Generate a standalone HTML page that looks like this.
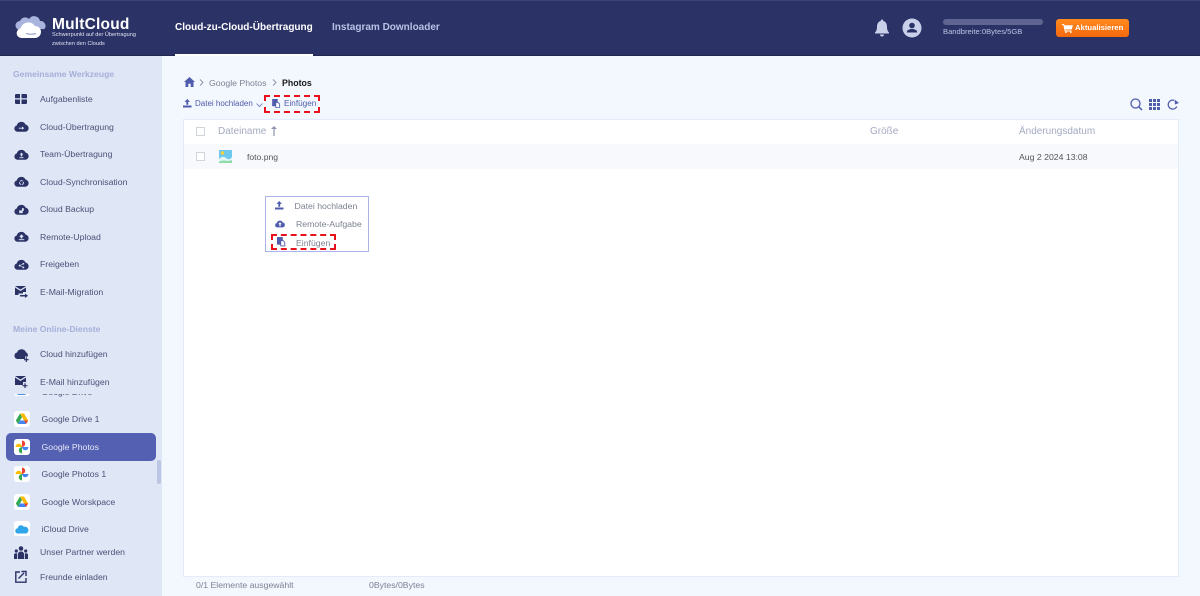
<!DOCTYPE html>
<html lang="de"><head><meta charset="utf-8"><title>MultCloud</title>
<style>
*{box-sizing:border-box}
html,body{margin:0;padding:0;background:#f3f7fe}
#w{width:1200px;height:596px;overflow:hidden;position:relative;background:#f3f7fe;font-family:"Liberation Sans",sans-serif;filter:blur(.3px)}
body{width:1200px;height:596px;overflow:hidden}
.t{position:absolute;white-space:nowrap;line-height:12px;font-size:8.7px;color:#4a5176}
.a{position:absolute}
svg{position:absolute;overflow:visible}
.ic{fill:#2b3266}
.tile{position:absolute;left:13.500px;width:16px;height:16px;background:#fff;border-radius:3px}
</style></head><body><div id="w">
<svg width="0" height="0" style="position:absolute"><defs>
<path id="cl" d="M3.600 11.700a3.500 3.500 0 0 1-.7-6.900A5.100 5.100 0 0 1 12.500 4a3.900 3.900 0 0 1 0 7.700z"/>
<g id="gp"><path d="M8 8V1.500a3.250 3.250 0 0 1 0 6.500z" fill="#ea4335"/><path d="M8 8h6.500a3.250 3.250 0 0 1-6.500 0z" fill="#4285f4"/><path d="M8 8v6.500a3.250 3.250 0 0 1 0-6.500z" fill="#34a853"/><path d="M8 8H1.500a3.250 3.250 0 0 1 6.500 0z" fill="#fbbc04"/></g>
<g id="gd"><path d="M6 2.500l2 3.500-4 7-2.200-3.500z" fill="#34a853"/><path d="M6 2.500h4l4.200 7h-4.200z" fill="#fbbc04"/><path d="M6 9.500h8.200L12 13H4z" fill="#4285f4"/><path d="M14.200 9.500L12 13l-1.800-3.500z" fill="#ea4335"/></g>
<path id="up" d="M5 0L1.800 3.400h2.100v3.300h2.200V3.400h2.100zM0 7.700h10V10H0z"/>
<g id="pa"><path d="M0 0h6.500v8.500H0z" fill="#4f5bab"/><path d="M4.200 4h2.600l2 2v4H4.200z" fill="#fff" stroke="#4f5bab" stroke-width="1"/></g>
</defs></svg>

<!-- Header -->
<div class="a" style="left:0;top:0;width:1200px;height:56px;background:#2b3266;border-top:1px solid #3b4274;border-bottom:1px solid #20264f"></div>
<svg style="left:15px;top:16px" width="32" height="24" viewBox="0 0 32 24">
<path d="M5 14a4.500 4.500 0 0 1 0-9 5.500 5.500 0 0 1 9-2 6 6 0 0 1 11 2 5 5 0 0 1 4.500 8z" fill="#a9b4de"/>
<path d="M6.500 22a4.800 4.800 0 0 1-1-9.500A8 8 0 0 1 20 10a6 6 0 0 1 6 6 6 6 0 0 1-5 6z" fill="#fff"/>
<path d="M11 17.500q5 1.500 10 0" stroke="#8f98c2" stroke-width="1" fill="none"/></svg>
<div class="t" style="left:52px;top:15px;font-size:15.500px;line-height:19px;font-weight:bold;color:#fff;letter-spacing:.2px">MultCloud</div>
<div class="t" style="left:52px;top:31px;font-size:5.600px;line-height:8px;color:#dfe3f5">Schwerpunkt auf der Übertragung</div>
<div class="t" style="left:52px;top:40px;font-size:5.600px;line-height:8px;color:#dfe3f5">zwischen den Clouds</div>
<div class="t" style="left:175px;top:21px;font-size:10px;line-height:14px;font-weight:bold;color:#fff">Cloud-zu-Cloud-Übertragung</div>
<div class="a" style="left:175px;top:54px;width:138px;height:2px;background:#fff"></div>
<div class="t" style="left:332px;top:21px;font-size:10px;line-height:14px;font-weight:bold;color:#b9c2e6">Instagram Downloader</div>

<svg style="left:874px;top:19px" width="16" height="18" viewBox="0 0 16 18"><path d="M8 0.500a1.300 1.300 0 0 1 1.300 1.500C12 2.700 13 5 13 8c0 3 1 4.500 2 5.500v1H1v-1C2 12.500 3 11 3 8c0-3 1-5.300 3.700-6A1.300 1.300 0 0 1 8 .5zM6 15.500h4a2 2 0 0 1-4 0z" fill="#c9d0ea"/></svg>
<svg style="left:902px;top:18px" width="20" height="20" viewBox="0 0 20 20"><circle cx="10" cy="10" r="9.500" fill="#c9d0ea"/><circle cx="10" cy="7.500" r="2.800" fill="#2b3266"/><path d="M4.800 14.500c0-2.500 2.500-3.500 5.200-3.500s5.200 1 5.200 3.500z" fill="#2b3266"/></svg>
<div class="a" style="left:943px;top:19px;width:100px;height:6px;border-radius:3px;background:#5f6590"></div>
<div class="t" style="left:943px;top:26px;font-size:7.600px;line-height:12px;color:#bcc4e6">Bandbreite:0Bytes/5GB</div>
<div class="a" style="left:1056px;top:19px;width:73px;height:18px;border-radius:3px;background:linear-gradient(#ff8a1e,#f5680c)"></div>
<svg style="left:1062px;top:24px" width="11" height="9" viewBox="0 0 11 9"><path d="M0 0h2l.5 1.200H11L9.700 5.500H3.400l.2 1h6v1H2.800L1.300 1H0z" fill="#fff"/><circle cx="4" cy="8.300" r=".8" fill="#fff"/><circle cx="8.800" cy="8.300" r=".8" fill="#fff"/></svg>
<div class="t" style="left:1075px;top:22px;font-size:7.700px;font-weight:bold;color:#fff">Aktualisieren</div>

<!-- Sidebar -->
<div class="a" style="left:0;top:56px;width:162px;height:540px;background:#dfe6f6"></div>
<div class="t" style="left:13px;top:68px;font-size:8.600px;font-weight:bold;color:#a6afd9">Gemeinsame Werkzeuge</div>

<svg style="left:15px;top:94px" width="12" height="10" viewBox="0 0 12 10"><path class="ic" d="M.8 0h4.200v4.300H0V.8zM6.500 0h4.700l.8.8v3.500H6.500zM0 5.500h5V10H.8L0 9.200zM6.500 5.500H12v3.700l-.8.8H6.500z"/></svg>
<div class="t" style="left:40px;top:93px">Aufgabenliste</div>

<svg style="left:13.500px;top:121px" width="15" height="11" viewBox="0 0 16 12"><use href="#cl" class="ic"/><path d="M5 7.300h3.500V6l2.500 1.800L8.500 9.600V8.300H5z" fill="#dfe6f6"/></svg>
<div class="t" style="left:40px;top:120.500px">Cloud-Übertragung</div>

<svg style="left:13.500px;top:148.500px" width="15" height="11" viewBox="0 0 16 12"><use href="#cl" class="ic"/><path d="M8 4L10 6H8.800v2H7.200V6H6zM5.800 9h4.400v.9H5.800z" fill="#dfe6f6"/></svg>
<div class="t" style="left:40px;top:148px">Team-Übertragung</div>

<svg style="left:13.500px;top:176px" width="15" height="11" viewBox="0 0 16 12"><use href="#cl" class="ic"/><circle cx="8" cy="7.200" r="2.100" fill="none" stroke="#dfe6f6" stroke-width="1" stroke-dasharray="3 1"/></svg>
<div class="t" style="left:40px;top:175.500px">Cloud-Synchronisation</div>

<svg style="left:13.500px;top:203.500px" width="15" height="11" viewBox="0 0 16 12"><use href="#cl" class="ic"/><path d="M8.500 4.500h2v3h-2zM5.500 7h3.800v3H5.500z" fill="#dfe6f6"/></svg>
<div class="t" style="left:40px;top:203px">Cloud Backup</div>

<svg style="left:13.500px;top:231px" width="15" height="11" viewBox="0 0 16 12"><use href="#cl" class="ic"/><path d="M8 3.500L10.500 6.300H9V8H7V6.300H5.500zM5 9h6v1H5z" fill="#dfe6f6"/></svg>
<div class="t" style="left:40px;top:230.500px">Remote-Upload</div>

<svg style="left:13.500px;top:258.500px" width="15" height="11" viewBox="0 0 16 12"><use href="#cl" class="ic"/><g fill="#dfe6f6"><circle cx="6" cy="7.200" r="1"/><circle cx="10" cy="5.200" r="1"/><circle cx="10" cy="9.200" r="1"/></g><path d="M6 7.200l4-2M6 7.200l4 2" stroke="#dfe6f6" stroke-width=".6"/></svg>
<div class="t" style="left:40px;top:258px">Freigeben</div>

<svg style="left:15px;top:286px" width="13" height="12" viewBox="0 0 13 12"><path class="ic" d="M0 0h11L5.500 3.500zM0 1.500l5.500 3.500L11 1.500V6H8v1.500H3.500V9H0z"/><path class="ic" d="M5 9h5V7.500l3 2.300-3 2.200v-1.500H5z"/></svg>
<div class="t" style="left:40px;top:285.500px">E-Mail-Migration</div>

<div class="t" style="left:13px;top:323px;font-size:8.600px;font-weight:bold;color:#a6afd9">Meine Online-Dienste</div>

<svg style="left:13.500px;top:349px" width="15" height="13" viewBox="0 0 15 13"><path class="ic" d="M3.500 10a3.300 3.300 0 0 1-.5-6.500A4.800 4.800 0 0 1 12 3.300 3.400 3.400 0 0 1 13.800 7.500H11V10z"/><path class="ic" d="M11.700 8.300h1.200v1.800h1.800v1.200h-1.800V13h-1.200v-1.700H10v-1.200h1.700z"/></svg>
<div class="t" style="left:40px;top:348px">Cloud hinzufügen</div>

<svg style="left:15px;top:376px" width="13" height="12" viewBox="0 0 13 12"><path class="ic" d="M0 0h11L5.500 3.500zM0 1.500l5.500 3.500L11 1.500V6H8v3H0z"/><path class="ic" d="M9.400 7.300h1.200v1.800h1.800v1.200h-1.800V12H9.400v-1.700H7.600V9.100h1.800z"/></svg>
<div class="t" style="left:40px;top:375.500px">E-Mail hinzufügen</div>

<!-- scrolling list -->
<div class="a" style="left:0;top:394px;width:162px;height:142px;overflow:hidden">
  <div class="a" style="left:13.500px;top:-14px;width:16px;height:16px;background:#fff;border-radius:3px"></div>
  <div class="a" style="left:16px;top:-3px;width:11px;height:4px;background:#4a90e2;border-radius:0 0 3px 3px"></div>
  <div class="t" style="left:41.500px;top:-8px">Google Drive</div>

  <div class="tile" style="top:17px"><svg width="16" height="16" viewBox="0 0 16 16"><use href="#gd"/></svg></div>
  <div class="t" style="left:41.500px;top:19px">Google Drive 1</div>

  <div class="a" style="left:6px;top:39px;width:150px;height:28px;background:#5460b1;border-radius:5px"></div>
  <div class="tile" style="top:45px"><svg width="16" height="16" viewBox="0 0 16 16"><use href="#gp"/></svg></div>
  <div class="t" style="left:41.500px;top:47px;color:#e6e9f8">Google Photos</div>

  <div class="tile" style="top:72px"><svg width="16" height="16" viewBox="0 0 16 16"><use href="#gp"/></svg></div>
  <div class="t" style="left:41.500px;top:74px">Google Photos 1</div>

  <div class="tile" style="top:100px"><svg width="16" height="16" viewBox="0 0 16 16"><use href="#gd"/></svg></div>
  <div class="t" style="left:41.500px;top:101.500px">Google Worskpace</div>

  <div class="tile" style="top:127px"><svg width="16" height="16" viewBox="0 0 16 16"><path d="M4 12.500a2.600 2.600 0 0 1-.3-5.200A3.300 3.300 0 0 1 9.800 5.800 3.400 3.400 0 0 1 12 12.500z" fill="#2fa5ea"/></svg></div>
  <div class="t" style="left:41.500px;top:129px">iCloud Drive</div>
</div>
<div class="a" style="left:157px;top:460px;width:4px;height:24px;border-radius:2px;background:#bcc6e4"></div>

<svg style="left:14px;top:546px" width="14" height="13" viewBox="0 0 14 13"><g class="ic"><circle cx="7" cy="2.500" r="2.300"/><circle cx="2.300" cy="5" r="1.600"/><circle cx="11.700" cy="5" r="1.600"/><path d="M4 13V8a3 2.500 0 0 1 6 0v5zM0 13V8.500Q0 7.200 2.500 7.200L3.200 7.500V13zM14 13V8.500q0-1.300-2.500-1.300l-.7.300V13z"/></g></svg>
<div class="t" style="left:40px;top:546px">Unser Partner werden</div>

<svg style="left:15px;top:570px" width="12" height="13" viewBox="0 0 12 13"><path d="M5 2H.8v10.200H11V8" fill="none" stroke="#2b3266" stroke-width="1.400"/><path d="M3.500 8.500L9 3M6.500 1.500h4.500V6" fill="none" stroke="#2b3266" stroke-width="1.400"/></svg>
<div class="t" style="left:40px;top:571px">Freunde einladen</div>

<!-- Breadcrumb -->
<svg style="left:184px;top:77px" width="11" height="10" viewBox="0 0 11 10"><path d="M5.500 0L11 5H9.500v5H6.700V6.800H4.300V10H1.500V5H0z" fill="#4f5bab"/></svg>
<svg style="left:199px;top:79px" width="5" height="7" viewBox="0 0 5 7"><path d="M1 .5l3 3-3 3" fill="none" stroke="#888ea5" stroke-width=".9"/></svg>
<div class="t" style="left:209px;top:77px;color:#7d8292">Google Photos</div>
<svg style="left:272px;top:79px" width="5" height="7" viewBox="0 0 5 7"><path d="M1 .5l3 3-3 3" fill="none" stroke="#888ea5" stroke-width=".9"/></svg>
<div class="t" style="left:282px;top:77px;font-size:8.800px;font-weight:bold;color:#1a1a1a">Photos</div>

<!-- Toolbar -->
<svg style="left:183px;top:99px" width="8.500" height="8.500" viewBox="0 0 10 10"><use href="#up" fill="#4f5bab"/></svg>
<div class="t" style="left:195px;top:98px;font-size:8px;color:#4f5bab">Datei hochladen</div>
<svg style="left:256px;top:103px" width="7" height="4" viewBox="0 0 7 4"><path d="M.5.500l3 3 3-3" fill="none" stroke="#6a73b5" stroke-width=".8"/></svg>
<div class="a" style="left:264px;top:95px;width:56px;height:18px;border:2px dashed #e8121c"></div>
<svg style="left:272px;top:99px" width="8" height="8.500" viewBox="0 0 9 10"><use href="#pa"/></svg>
<div class="t" style="left:284px;top:98px;font-size:8.200px;color:#4f5bab">Einfügen</div>

<svg style="left:1130px;top:98px" width="13" height="13" viewBox="0 0 13 13"><circle cx="5.500" cy="5.500" r="4.500" fill="none" stroke="#4f5bab" stroke-width="1.300"/><path d="M8.800 8.800L12 12" stroke="#4f5bab" stroke-width="1.500"/></svg>
<svg style="left:1149px;top:99px" width="11" height="11" viewBox="0 0 11 11"><g fill="#4f5bab"><rect width="3" height="3"/><rect x="4" width="3" height="3"/><rect x="8" width="3" height="3"/><rect y="4" width="3" height="3"/><rect x="4" y="4" width="3" height="3"/><rect x="8" y="4" width="3" height="3"/><rect y="8" width="3" height="3"/><rect x="4" y="8" width="3" height="3"/><rect x="8" y="8" width="3" height="3"/></g></svg>
<svg style="left:1167px;top:99px" width="12" height="11" viewBox="0 0 12 11"><path d="M9.800 7.500A4.500 4.500 0 1 1 7 1.300" fill="none" stroke="#4f5bab" stroke-width="1.300"/><path d="M7 0l4.500 3.500-4 1.500z" fill="#4f5bab" transform="translate(.5 .5)"/></svg>

<!-- Table -->
<div class="a" style="left:183px;top:119px;width:996px;height:458px;background:#fff;border:1px solid #e3ebf8"></div>
<div class="a" style="left:184px;top:144px;width:994px;height:25px;background:#f7f9fd"></div>
<div class="a" style="left:196px;top:127px;width:9px;height:9px;border:1px solid #d0d4dc;background:#fff"></div>
<div class="t" style="left:218px;top:125px;font-size:10px;line-height:13px;color:#a4abc0">Dateiname</div>
<svg style="left:271px;top:126px" width="6" height="10" viewBox="0 0 6 10"><path d="M3 0L6 3H3.600v7H2.400V3H0z" fill="#8e95ad"/></svg>
<div class="t" style="left:870px;top:125px;font-size:10px;line-height:13px;color:#a4abc0">Größe</div>
<div class="t" style="left:1019px;top:125px;font-size:10px;line-height:13px;color:#a4abc0">Änderungsdatum</div>

<div class="a" style="left:196px;top:152px;width:9px;height:9px;border:1px solid #d0d4dc;background:#fff"></div>
<svg style="left:219px;top:150px" width="13" height="13" viewBox="0 0 13 13"><rect width="13" height="13" fill="#6fc8f0"/><circle cx="3.500" cy="3" r="1.700" fill="#f4d03f"/><path d="M0 9Q4 5 7 8t6-1v6H0z" fill="#e2f6fa"/><path d="M0 11.500q4-1.500 7-.8t6-.7V13H0z" fill="#8fdca8"/></svg>
<div class="t" style="left:247px;top:151px;font-size:8.600px;color:#555">foto.png</div>
<div class="t" style="left:1019px;top:151px;color:#555">Aug 2 2024 13:08</div>

<!-- Context menu -->
<div class="a" style="left:265px;top:196px;width:104px;height:56px;background:#fff;border:1px solid #aab4e6"></div>
<svg style="left:275px;top:201px" width="8.500" height="8.500" viewBox="0 0 10 10"><use href="#up" fill="#4f5bab"/></svg>
<div class="t" style="left:294.500px;top:200px;color:#7d8292">Datei hochladen</div>
<svg style="left:275px;top:220px" width="10" height="7.500" viewBox="0 0 16 12"><use href="#cl" fill="#4f5bab"/><path d="M8 3.500L10.800 6.500H9V10H7V6.500H5.200z" fill="#fff"/></svg>
<div class="t" style="left:296px;top:218px;color:#7d8292">Remote-Aufgabe</div>
<div class="a" style="left:271px;top:234px;width:65px;height:16px;border:2px dashed #e8121c"></div>
<svg style="left:277px;top:237px" width="8" height="9" viewBox="0 0 9 10"><use href="#pa"/></svg>
<div class="t" style="left:296px;top:236.500px;color:#7d8292">Einfügen</div>

<!-- Footer -->
<div class="t" style="left:196px;top:579px;color:#7d8292">0/1 Elemente ausgewählt</div>
<div class="t" style="left:369px;top:579px;color:#7d8292">0Bytes/0Bytes</div>
</div></body></html>
